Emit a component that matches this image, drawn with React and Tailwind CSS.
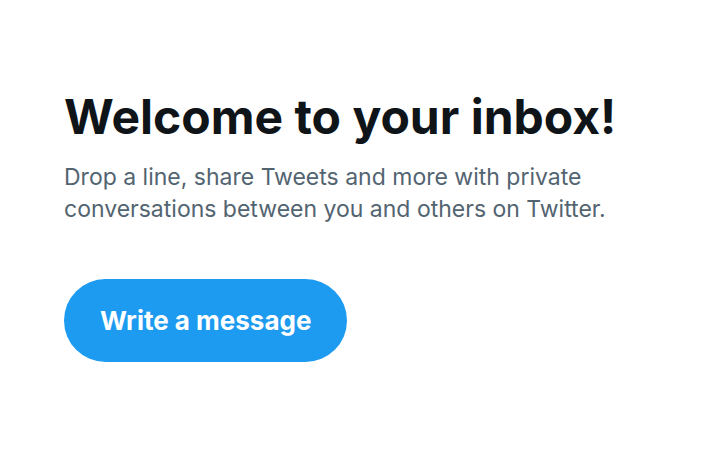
export default function App() {
  return (
    <div
      className="w-[720px] h-[456px] bg-white flex flex-col px-[64px] pt-[88px]"
      style={{ fontFamily: "Inter, 'Noto Sans', sans-serif" }}
    >
      <h1 className="text-[48px] leading-[58px] font-bold text-[#0f1419]">
        Welcome to your inbox!
      </h1>
      <p className="mt-[15px] text-[23px] leading-[32px] text-[#536471]">
        Drop a line, share Tweets and more with private conversations between you and others on Twitter.
      </p>
      <div className="mt-[54px]">
        <button className="h-[83px] px-[36px] rounded-full bg-[#1d9bf0] text-white text-[26px] font-bold">
          Write a message
        </button>
      </div>
    </div>
  );
}
